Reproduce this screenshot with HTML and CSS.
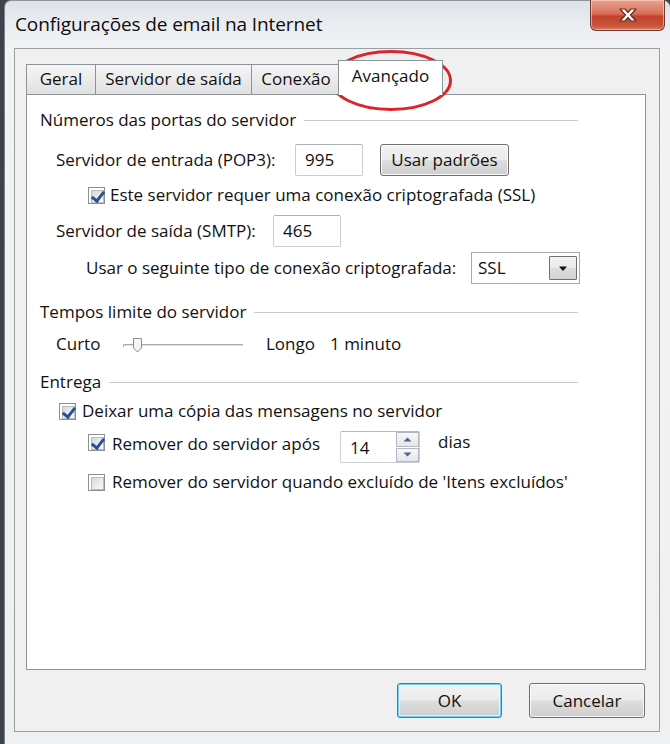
FILE: index.html
```html
<!DOCTYPE html>
<html lang="pt">
<head>
<meta charset="utf-8">
<title>Configurações de email na Internet</title>
<link rel="stylesheet" href="styles.css">
</head>
<body>
<div class="window">
  <div class="titlebar">
    <div class="title">Configurações de email na Internet</div>
    <div class="close">
      <svg width="22" height="16" viewBox="0 0 22 16">
        <path d="M3 2 L8 2 L11 5.5 L14 2 L19 2 L13.5 8 L19 14 L14 14 L11 10.5 L8 14 L3 14 L8.5 8 Z" fill="#fff" stroke="#6b2b22" stroke-width="1.2" stroke-linejoin="round"/>
      </svg>
    </div>
  </div>
  <div class="client">
    <div class="tabs">
      <div class="tab t-geral">Geral</div>
      <div class="tab t-saida">Servidor de saída</div>
      <div class="tab t-conexao">Conexão</div>
      <div class="tab active">Avançado</div>
    </div>
    <div class="panel">
      <div class="group-head g1"><span>Números das portas do servidor</span></div>

      <div class="row r-pop">
        <span class="lbl w-pop">Servidor de entrada (POP3):</span>
        <span class="textbox">995</span>
        <span class="button btn-padroes">Usar padrões</span>
      </div>

      <div class="row r-ssl">
        <span class="check on"></span>
        <span class="lbl">Este servidor requer uma conexão criptografada (SSL)</span>
      </div>

      <div class="row r-smtp">
        <span class="lbl w-smtp">Servidor de saída (SMTP):</span>
        <span class="textbox">465</span>
      </div>

      <div class="row r-tipo">
        <span class="lbl w-tipo">Usar o seguinte tipo de conexão criptografada:</span>
        <span class="select">
          <span class="select-val">SSL</span>
          <span class="select-btn"><svg width="10" height="6" viewBox="0 0 10 6"><path d="M1 0.5 H9 L5 5 Z" fill="#111"/></svg></span>
        </span>
      </div>

      <div class="group-head g2"><span>Tempos limite do servidor</span></div>

      <div class="row r-tempo">
        <span class="lbl w-curto">Curto</span>
        <span class="slider">
          <svg width="120" height="20" viewBox="0 0 120 20">
            <path d="M0.5 12 V9.5 H120" fill="none" stroke="#a9a9a9" stroke-width="1"/>
            <path d="M1 10.5 H120" fill="none" stroke="#e4e4e4" stroke-width="1"/>
            <path d="M10.5 3.5 H18.5 V13 L14.5 17 L10.5 13 Z" fill="#f4f4f4" stroke="#8d8d8d" stroke-width="1"/>
            <path d="M12 5 H17" stroke="#fff" stroke-width="1"/>
          </svg>
        </span>
        <span class="lbl w-longo">Longo</span>
        <span class="lbl">1 minuto</span>
      </div>

      <div class="group-head g3"><span>Entrega</span></div>

      <div class="row r-deixar">
        <span class="check on"></span>
        <span class="lbl">Deixar uma cópia das mensagens no servidor</span>
      </div>

      <div class="row r-apos">
        <span class="check on"></span>
        <span class="lbl w-apos">Remover do servidor após</span>
        <span class="spinner">
          <span class="spin-val">14</span>
          <span class="spin-btns">
            <span class="spin-btn"><svg width="9" height="5" viewBox="0 0 9 5"><path d="M0.5 4.5 L4.5 0.5 L8.5 4.5 Z" fill="#4a6690"/></svg></span>
            <span class="spin-btn"><svg width="9" height="5" viewBox="0 0 9 5"><path d="M0.5 0.5 L4.5 4.5 L8.5 0.5 Z" fill="#4a6690"/></svg></span>
          </span>
        </span>
        <span class="lbl dias">dias</span>
      </div>

      <div class="row r-quando">
        <span class="check"></span>
        <span class="lbl">Remover do servidor quando excluído de 'Itens excluídos'</span>
      </div>
    </div>
    <div class="buttons">
      <span class="button default btn-ok">OK</span>
      <span class="button btn-cancel">Cancelar</span>
    </div>
  </div>
  <svg class="annotation" width="124" height="63" viewBox="0 0 124 63">
    <ellipse cx="62" cy="31.5" rx="59.5" ry="29" fill="none" stroke="#d8262c" stroke-width="3"/>
  </svg>
</div>
</body>
</html>
```

FILE: styles.css
```css
* { box-sizing: border-box; }

html, body {
  margin: 0;
  padding: 0;
  width: 670px;
  height: 744px;
  overflow: hidden;
  background: #3d434b;
  font-family: "Open Sans", "Noto Sans", "Liberation Sans", sans-serif;
  color: #111;
}

.window {
  position: relative;
  margin-left: 4px;
  width: 666px;
  height: 744px;
  border-radius: 7px 7px 0 0;
  background: linear-gradient(180deg, #dde2e6 0px, #e9ecef 20px, #f1f3f5 48px, #eef0f2 100%);
  border-top: 1px solid #8f9599;
  border-left: 1px solid #7c8288;
}

.titlebar {
  display: flex;
  justify-content: space-between;
  align-items: flex-start;
  height: 47px;
}

.title {
  padding: 10px 0 0 10px;
  font-size: 19px;
  line-height: 26px;
  color: #0c0c0c;
  letter-spacing: -0.1px;
}

.close {
  width: 75px;
  height: 31px;
  margin: -1px 5px 0 0;
  border: 1px solid #6e3a33;
  border-top: none;
  border-radius: 0 0 6px 6px;
  background: linear-gradient(180deg, #e9a58f 0%, #d9705a 45%, #c2422c 55%, #c6553b 85%, #d77a5a 100%);
  box-shadow: inset 0 0 0 1px rgba(255, 220, 210, 0.55);
  display: flex;
  align-items: center;
  justify-content: center;
}

.client {
  margin-left: 9px;
  width: 646px;
  height: 684px;
  border: 1px solid #9a9fa5;
  background: #f0f0f0;
  padding: 11px 13px 0 11px;
  display: flex;
  flex-direction: column;
}

.tabs {
  display: flex;
  align-items: flex-end;
  height: 34px;
  position: relative;
  z-index: 2;
  font-size: 17px;
}

.tab {
  height: 30px;
  border: 1px solid #8e929a;
  border-bottom: none;
  background: linear-gradient(180deg, #f5f5f5 0%, #ebebeb 50%, #dfdfdf 100%);
  display: flex;
  align-items: center;
  justify-content: center;
  line-height: 20px;
  padding-bottom: 1px;
}

.tab + .tab { margin-left: -1px; }

.t-geral { width: 70px; }
.t-saida { width: 157px; }
.t-conexao { width: 90px; }

.tab.active {
  width: 105px;
  height: 35px;
  margin-left: -3px;
  margin-bottom: -1px;
  background: #fff;
  padding-bottom: 4px;
}

.panel {
  width: 620px;
  height: 576px;
  border: 1px solid #8e929a;
  background: #fff;
  display: flex;
  flex-direction: column;
  font-size: 17px;
}

.group-head {
  display: flex;
  align-items: center;
  height: 24px;
  padding-left: 13px;
  margin-right: 67px;
}

.group-head::after {
  content: "";
  flex: 1;
  height: 1px;
  margin-left: 8px;
  margin-top: 2px;
  background: #c7cbd0;
}

.g1 { margin-top: 12px; }
.g2 { margin-top: 15px; }
.g3 { margin-top: 13px; }

.row {
  display: flex;
  align-items: center;
  height: 24px;
  white-space: nowrap;
}

.lbl { line-height: 24px; flex: none; }

.r-pop { height: 32px; margin-top: 13px; padding-left: 29px; }
.w-pop { width: 239px; }

.r-ssl { margin-top: 7px; padding-left: 61px; }
.r-ssl .check { margin-right: 5px; }

.r-smtp { height: 32px; margin-top: 8px; padding-left: 29px; }
.w-smtp { width: 217px; }

.r-tipo { height: 32px; margin-top: 5px; padding-left: 59px; }
.w-tipo { width: 385px; }

.r-tempo { margin-top: 9px; padding-left: 29px; }
.w-curto { width: 67px; }
.w-longo { width: 64px; }
.slider { width: 120px; height: 20px; margin-right: 23px; margin-top: 1px; display: block; }
.slider svg { display: block; }

.r-deixar { margin-top: 6px; padding-left: 32px; }
.r-deixar .check { margin-right: 6px; }

.r-apos { height: 32px; margin-top: 8px; padding-left: 61px; align-items: flex-start; }
.r-apos .check { margin-top: 3px; margin-right: 7px; }
.r-apos .lbl { margin-top: 1px; }
.w-apos { width: 228px; }
.r-apos .dias { margin-left: 18px; margin-top: -1px; }

.r-quando { margin-top: 7px; padding-left: 61px; }
.r-quando .check { margin-right: 7px; }

.check {
  flex: none;
  width: 17px;
  height: 17px;
  border: 1px solid #8e8f8f;
  background: #fff;
  padding: 2px;
  display: block;
  position: relative;
}

.check::before {
  content: "";
  display: block;
  width: 11px;
  height: 11px;
  border: 1px solid #b9bcbf;
  background: linear-gradient(135deg, #d5d7da 0%, #eceef0 60%, #f8f9fa 100%);
}

.check.on::after {
  content: "";
  position: absolute;
  top: 1px;
  left: 5px;
  width: 5px;
  height: 10px;
  border-right: 3px solid #2b4f94;
  border-bottom: 3px solid #2b4f94;
  transform: rotate(38deg);
  transform-origin: center;
}

.textbox {
  flex: none;
  width: 68px;
  height: 32px;
  border: 1px solid #c9ced4;
  border-top-color: #aeb3b9;
  border-radius: 2px;
  background: #fff;
  padding-left: 9px;
  line-height: 30px;
}

.button {
  flex: none;
  height: 32px;
  border: 1px solid #707070;
  border-radius: 3px;
  background: linear-gradient(180deg, #f2f2f2 0%, #ebebeb 48%, #dddddd 52%, #cfcfcf 100%);
  box-shadow: inset 0 0 0 1px rgba(255, 255, 255, 0.8);
  display: flex;
  align-items: center;
  justify-content: center;
  line-height: 20px;
}

.btn-padroes { width: 129px; margin-left: 17px; }

.select {
  flex: none;
  width: 109px;
  height: 32px;
  border: 1px solid #a7abb0;
  background: #fff;
  display: flex;
  align-items: center;
  justify-content: space-between;
  padding: 0 2px 0 6px;
}

.select-val { line-height: 24px; }

.select-btn {
  width: 28px;
  height: 24px;
  border: 1px solid #707070;
  border-radius: 1px;
  background: linear-gradient(180deg, #f3f3f3 0%, #ebebeb 48%, #dddddd 52%, #d2d2d2 100%);
  display: flex;
  align-items: center;
  justify-content: center;
  padding-top: 1px;
}

.spinner {
  flex: none;
  width: 80px;
  height: 32px;
  border: 1px solid #ccd1d6;
  border-top-color: #b3b8be;
  border-radius: 2px;
  background: #fff;
  display: flex;
  justify-content: space-between;
}

.spin-val { padding-left: 9px; line-height: 32px; }

.spin-btns {
  width: 23px;
  display: flex;
  flex-direction: column;
  gap: 1px;
}

.spin-btn {
  flex: 1;
  border: 1px solid #b3b8c0;
  background: linear-gradient(180deg, #f6f7f8 0%, #e4e7ea 100%);
  display: flex;
  align-items: center;
  justify-content: center;
}

.spin-btn svg { display: block; }

.buttons {
  display: flex;
  justify-content: flex-end;
  gap: 27px;
  margin-top: 13px;
  padding-right: 1px;
  font-size: 17px;
}

.buttons .button { height: 35px; }
.btn-ok { width: 105px; }
.btn-cancel { width: 116px; }

.button.default {
  border-color: #3c7fb1;
  box-shadow: inset 0 0 0 1px #6fd0f5, inset 0 0 0 2px rgba(255,255,255,0.6);
}

.annotation {
  position: absolute;
  left: 324px;
  top: 48px;
}
```
